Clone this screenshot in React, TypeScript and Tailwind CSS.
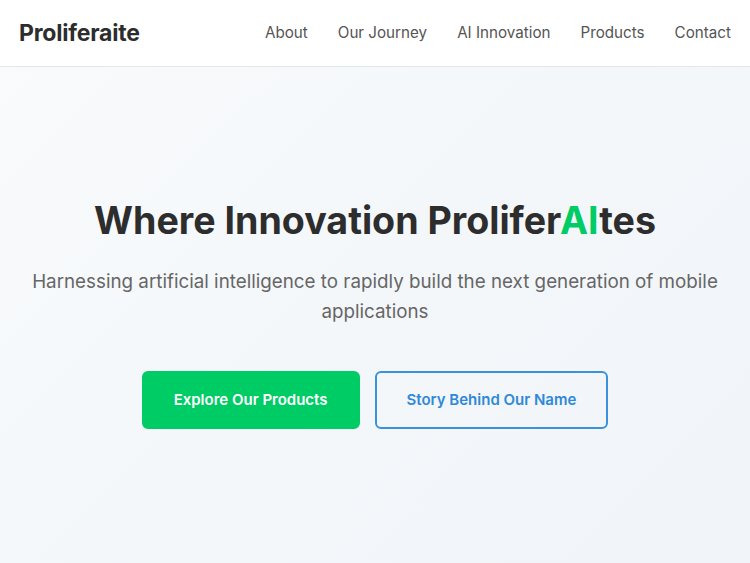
import React from "react";

export default function App() {
  return (
    <div
      className="min-h-[563px] w-full bg-[linear-gradient(135deg,#f9fbfc_0%,#f4f7fa_50%,#f1f4f8_100%)] text-[#333]"
      style={{ fontFamily: "Inter, 'Noto Sans', sans-serif" }}
    >
      <header className="flex h-[67px] items-center justify-between border-b border-[#e3e6ea] bg-white px-[19px]">
        <div className="text-[23px] font-bold tracking-[-0.2px] text-[#2d2d2d]">Proliferaite</div>
        <nav className="flex items-center gap-[30px] text-[15.2px] text-[#555]">
          <a>About</a>
          <a>Our Journey</a>
          <a>AI Innovation</a>
          <a>Products</a>
          <a>Contact</a>
        </nav>
      </header>
      <section className="flex flex-col items-center px-5 pt-[130px] text-center">
        <h1 className="text-[37.6px] font-bold leading-[48px] text-[#2d2d2d]">
          Where Innovation Prolifer<span className="text-[#00cc66]">AI</span>tes
        </h1>
        <p className="mt-[22px] max-w-[700px] text-[18.8px] leading-[30px] text-[#666]">
          Harnessing artificial intelligence to rapidly build the next generation of mobile applications
        </p>
        <div className="mt-[44px] flex gap-[15px]">
          <button className="rounded-[6px] border-2 border-[#00cc66] bg-[#00cc66] px-[30px] py-[15px] text-[15px] font-semibold leading-[24px] text-white">
            Explore Our Products
          </button>
          <button className="rounded-[6px] border-2 border-[#3a92dc] bg-transparent px-[30px] py-[15px] text-[15px] font-semibold leading-[24px] text-[#2f89d6]">
            Story Behind Our Name
          </button>
        </div>
      </section>
    </div>
  );
}
